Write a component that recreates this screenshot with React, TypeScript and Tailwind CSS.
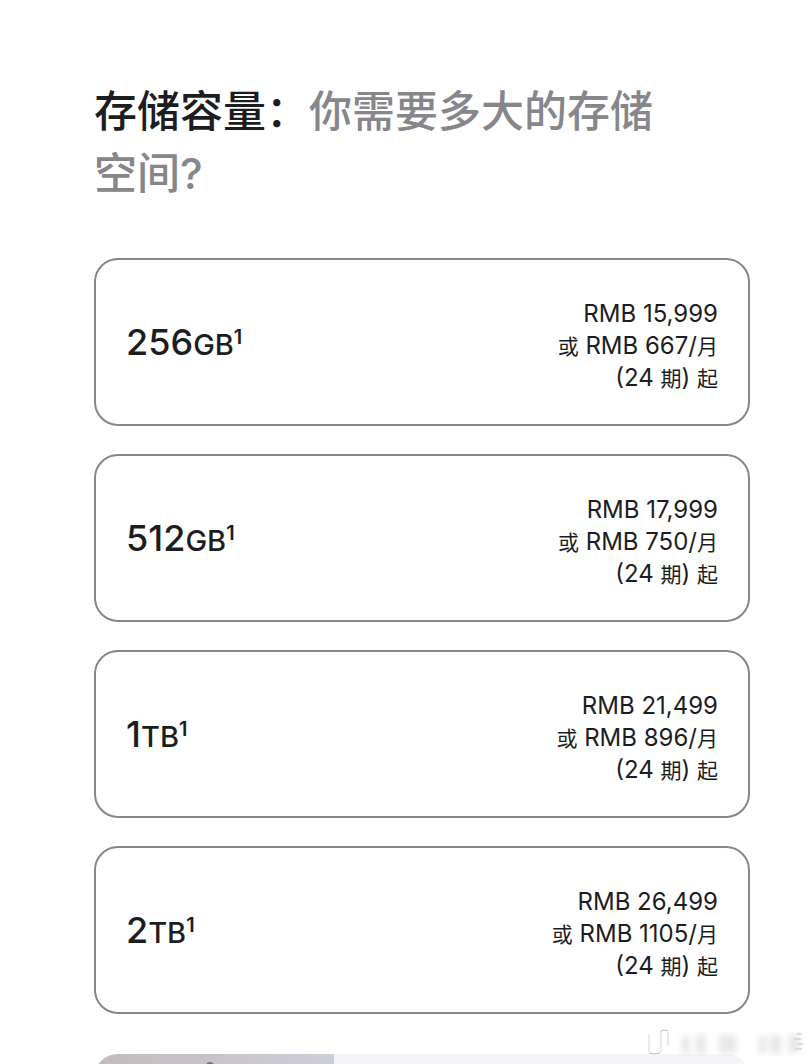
type Option = { size: string; unit: string; price: string; monthly: string };

const options: Option[] = [
  { size: "256", unit: "GB", price: "15,999", monthly: "667" },
  { size: "512", unit: "GB", price: "17,999", monthly: "750" },
  { size: "1", unit: "TB", price: "21,499", monthly: "896" },
  { size: "2", unit: "TB", price: "26,499", monthly: "1105" },
];

function StorageOption({ size, unit, price, monthly }: Option) {
  return (
    <button
      type="button"
      className="flex w-full items-center justify-between rounded-3xl border-2 border-[#86868b] bg-white px-[30px] py-[30px] text-[#1d1d1f]"
    >
      <span className="text-4xl font-medium">
        {size}
        <span className="text-[29px]">{unit}</span>
        <sup className="top-0 align-[11px] text-[20px] leading-none font-semibold">1</sup>
      </span>
      <span className="pt-2 text-right text-2xl leading-8">
        <span className="block h-8">RMB {price}</span>
        <span className="block h-8">
          <span className="text-[21px] leading-none">或</span> RMB {monthly}/
          <span className="text-[21px] leading-none">月</span>
        </span>
        <span className="block h-8">
          (24 <span className="text-[21px] leading-none">期</span>){" "}
          <span className="text-[21px] leading-none">起</span>
        </span>
      </span>
    </button>
  );
}

function Watermark() {
  return (
    <svg
      aria-hidden="true"
      className="absolute right-1 bottom-2 h-7 w-40"
      viewBox="0 0 160 28"
      fill="none"
    >
      <defs>
        <filter id="soft" x="-20%" y="-20%" width="140%" height="140%">
          <feGaussianBlur stdDeviation="3" />
        </filter>
      </defs>
      <path d="M3 6v18M15 25V3M22 4v14" stroke="#e4e4e4" strokeWidth="1.5" />
      <path d="M3 25q5 2 11 0M15 3q4-2 7 0" stroke="#bcbcbc" strokeWidth="1" />
      <g filter="url(#soft)" fill="#8c8c8c" opacity="0.2">
        <path d="M36 8h8v18h-8zM50 7h10v19h-10zM73 7h17v18h-17zM113 8h7v18h-7zM124 7h11v19h-11zM142 7h11v18h-11z" />
      </g>
      <path d="M151 6h5M148 11h7M151 16h6M149 21h7" stroke="#d4d4d4" strokeWidth="1.5" />
    </svg>
  );
}

export default function App() {
  return (
    <div className="relative h-screen overflow-hidden bg-white pt-20 pr-15 pl-[94px] font-['Inter','Noto_Sans_CJK_SC',sans-serif] text-[#1d1d1f]">
      <main lang="zh-CN">
        <h1 className="pr-20 text-[43px] leading-[62px] font-medium">
          <span>存储容量：</span>
          <span className="text-[#86868b]">你需要多大的存储空间?</span>
        </h1>
        <section aria-label="存储容量" className="mt-[54px] flex flex-col gap-7">
          {options.map((option) => (
            <StorageOption key={option.size} {...option} />
          ))}
        </section>
        <section className="mt-10 flex h-48 overflow-hidden rounded-3xl bg-[#f5f5f7]">
          <div className="relative w-60 bg-linear-to-r from-[#c4bbbb] to-[#cdcddb]">
            <div className="absolute top-2 left-28 h-3 w-2 rounded-full bg-[#77747a]" />
          </div>
        </section>
      </main>
      <Watermark />
    </div>
  );
}
